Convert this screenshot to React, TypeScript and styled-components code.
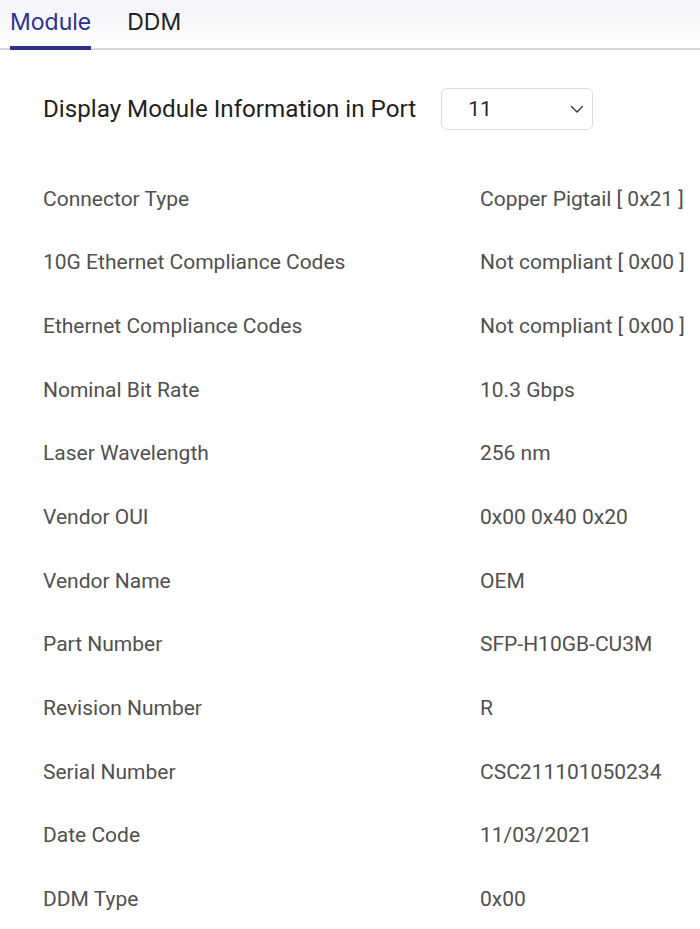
import React, { useState } from "react";
import styled, { createGlobalStyle } from "styled-components";

const Global = createGlobalStyle`
  html, body { margin: 0; padding: 0; background: #ffffff; }
  body { font-family: Roboto, "Noto Sans", sans-serif; }
`;

const Page = styled.div`
  width: 700px;
  min-height: 929px;
  background: #fff;
`;

const TabBar = styled.div`
  display: flex;
  align-items: flex-end;
  gap: 36px;
  padding-left: 10px;
  border-bottom: 2px solid #d6d6dc;
  background: linear-gradient(#f3f3f8, #ffffff);
  box-sizing: border-box;
  height: 50px;
`;

const Tab = styled.div<{ $active?: boolean }>`
  font-family: Inter, Roboto, sans-serif;
  font-size: 23px;
  line-height: 1;
  padding-bottom: 12px;
  color: ${(p) => (p.$active ? "#2b3190" : "#222")};
  border-bottom: 4px solid ${(p) => (p.$active ? "#2b3190" : "transparent")};
  margin-bottom: -2px;
  cursor: pointer;
`;

const Content = styled.div`
  padding: 38px 0 0 43px;
`;

const PortRow = styled.div`
  display: flex;
  align-items: center;
  gap: 25px;
  height: 42px;
`;

const PortLabel = styled.div`
  font-size: 24.2px;
  color: #1f1f1f;
  white-space: nowrap;
`;

const SelectBox = styled.div`
  width: 152px;
  height: 42px;
  box-sizing: border-box;
  border: 1px solid #dcdce0;
  border-radius: 6px;
  display: flex;
  align-items: center;
  justify-content: space-between;
  padding: 0 8px 0 26px;
  font-size: 21px;
  color: #2a2a2a;
`;

const Grid = styled.div`
  display: grid;
  grid-template-columns: 437px 1fr;
  grid-auto-rows: 63.65px;
  margin-top: 37px;
`;

const Cell = styled.div`
  display: flex;
  align-items: center;
  font-size: 21px;
  color: #505050;
  white-space: nowrap;
`;

const rows: [string, string][] = [
  ["Connector Type", "Copper Pigtail [ 0x21 ]"],
  ["10G Ethernet Compliance Codes", "Not compliant [ 0x00 ]"],
  ["Ethernet Compliance Codes", "Not compliant [ 0x00 ]"],
  ["Nominal Bit Rate", "10.3 Gbps"],
  ["Laser Wavelength", "256 nm"],
  ["Vendor OUI", "0x00 0x40 0x20"],
  ["Vendor Name", "OEM"],
  ["Part Number", "SFP-H10GB-CU3M"],
  ["Revision Number", "R"],
  ["Serial Number", "CSC211101050234"],
  ["Date Code", "11/03/2021"],
  ["DDM Type", "0x00"],
];

export default function App() {
  const [tab, setTab] = useState("Module");
  return (
    <Page>
      <Global />
      <TabBar>
        {["Module", "DDM"].map((t) => (
          <Tab key={t} $active={tab === t} onClick={() => setTab(t)}>
            {t}
          </Tab>
        ))}
      </TabBar>
      <Content>
        <PortRow>
          <PortLabel>Display Module Information in Port</PortLabel>
          <SelectBox>
            <span>11</span>
            <svg width="14" height="14" viewBox="0 0 14 14" fill="none">
              <path d="M1.5 4.5l5.5 5.5 5.5-5.5" stroke="#333" strokeWidth="1.4" strokeLinecap="round" strokeLinejoin="round" />
            </svg>
          </SelectBox>
        </PortRow>
        <Grid>
          {rows.map(([k, v], i) => (
            <React.Fragment key={i}>
              <Cell>{k}</Cell>
              <Cell>{v}</Cell>
            </React.Fragment>
          ))}
        </Grid>
      </Content>
    </Page>
  );
}
